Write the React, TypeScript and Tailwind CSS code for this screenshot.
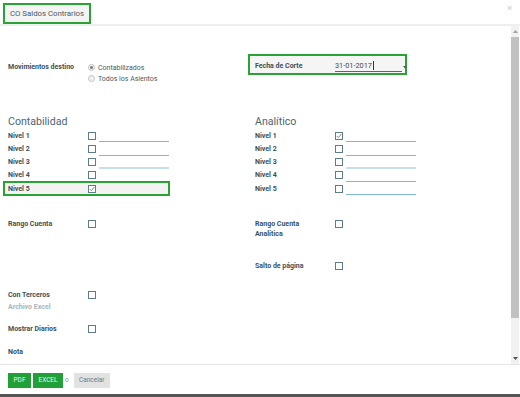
import React from "react";

const LBL = "text-[7px] font-bold text-[#3b525c] leading-[10px] whitespace-nowrap";

function Check({ checked }: { checked?: boolean }) {
  return (
    <div className="w-[8px] h-[8px] border border-[#5f7d88] bg-white flex items-center justify-center shrink-0">
      {checked && (
        <svg width="6" height="6" viewBox="0 0 6 6">
          <path d="M0.8 3.1 L2.3 4.6 L5.3 1.1" stroke="#6b7b80" strokeWidth="0.9" fill="none" />
        </svg>
      )}
    </div>
  );
}

function Line({ thick }: { thick?: boolean }) {
  return (
    <div
      className={
        thick
          ? "ml-[3px] w-[70px] h-full border-b-2 border-[#c6e0e8]"
          : "ml-[3px] w-[70px] h-full border-b border-[#7fbacb]"
      }
    />
  );
}

function LeftRow({ label, checked, input, thick, highlight }: { label: string; checked?: boolean; input?: boolean; thick?: boolean; highlight?: boolean }) {
  if (highlight) {
    return (
      <div className="-ml-[5px] -my-[1px] h-[15.25px] w-[167px] border-2 border-[#2aa336] bg-[#f3f3f3] pl-[3px] flex items-center">
        <div className={`${LBL} w-[80px]`}>{label}</div>
        <Check checked={checked} />
      </div>
    );
  }
  return (
    <div className="h-[13.25px] flex items-center">
      <div className={`${LBL} w-[80px]`}>{label}</div>
      <Check checked={checked} />
      {input && <Line thick={thick} />}
    </div>
  );
}

function Radio({ checked, label }: { checked?: boolean; label: string }) {
  return (
    <div className="flex items-center h-[11px]">
      <div className="w-[7px] h-[7px] rounded-full border border-[#c4c4c4] bg-[#f0f0f0] flex items-center justify-center">
        {checked && <div className="w-[3px] h-[3px] rounded-full bg-[#7a7a7a]" />}
      </div>
      <span className="ml-[3px] text-[7px] text-[#4c5a60] leading-[10px]">{label}</span>
    </div>
  );
}

export default function App() {
  const niveles = [1, 2, 3, 4, 5];
  return (
    <div className="w-[520px] h-[397px] flex flex-col bg-white font-['Roboto',sans-serif] overflow-hidden">
      {/* Header */}
      <div className="h-[26px] border-b-2 border-[#efefef] flex items-start justify-between shrink-0">
        <div className="ml-[3px] mt-[3px] h-[21px] border-2 border-[#2aa336] bg-[#f4f4f4] px-[5px] flex items-center">
          <span className="text-[7.8px] text-[#4c5a60] leading-none">CO Saldos Contrarios</span>
        </div>
        <span className="mr-[8px] mt-[4px] text-[9px] text-[#c8c8c8] leading-none">×</span>
      </div>

      {/* Body */}
      <div className="flex-1 flex min-h-0">
        <div className="flex-1 px-[8px] pt-[28px]">
          {/* Row 1 */}
          <div className="grid grid-cols-[247px_1fr] h-[21px]">
            <div className="flex items-start pt-[8px]">
              <div className={`${LBL} w-[80px]`}>Movimientos destino</div>
              <div className="flex flex-col">
                <Radio checked label="Contabilizados" />
                <Radio label="Todos los Asientos" />
              </div>
            </div>
            <div className="-ml-[7px] h-[21px] w-[159px] border-2 border-[#2aa336] bg-[#f5f5f5] pl-[5px] flex items-center">
              <div className={`${LBL} w-[80px] shrink-0 pt-[3px]`}>Fecha de Corte</div>
              <div className="flex items-end pt-[3px]">
                <div className="w-[67px] h-[11px] border-b border-[#4b6b78] flex items-center">
                  <span className="text-[7.3px] text-[#3c4a50] leading-none">31-01-2017</span>
                  <span className="w-[1px] h-[9px] bg-[#333] ml-[1px]" />
                </div>
                <svg width="4" height="3" viewBox="0 0 4 3" className="ml-[1px] mb-[3px]">
                  <path d="M0 0 L4 0 L2 2.5 Z" fill="#4b5b62" />
                </svg>
              </div>
            </div>
          </div>

          {/* Headings */}
          <div className="grid grid-cols-[247px_1fr] mt-[40px] h-[14px]">
            <div className="text-[10.6px] leading-[14px] text-[#4d6570]">Contabilidad</div>
            <div className="text-[10.6px] leading-[14px] text-[#4d6570]">Analítico</div>
          </div>

          {/* Niveles */}
          <div className="grid grid-cols-[247px_1fr]">
            {niveles.map((n) => (
              <React.Fragment key={n}>
                <LeftRow
                  label={`Nivel ${n}`}
                  checked={n === 5}
                  input={n <= 3}
                  thick={n === 3}
                  highlight={n === 5}
                />
                <div className="h-[13.25px] flex items-center">
                  <div className={`${LBL} w-[80px]`}>{`Nivel ${n}`}</div>
                  <Check checked={n === 1} />
                  <Line thick={n === 3} />
                </div>
              </React.Fragment>
            ))}
          </div>

          {/* Rango */}
          <div className="grid grid-cols-[247px_1fr] mt-[24px]">
            <div className="flex items-start">
              <div className={`${LBL} w-[80px]`}>Rango Cuenta</div>
              <div className="mt-[1px]"><Check /></div>
            </div>
            <div className="flex items-start">
              <div className={`${LBL} w-[80px]`}>Rango Cuenta<br />Analítica</div>
              <div className="mt-[1px]"><Check /></div>
            </div>
          </div>

          {/* Salto */}
          <div className="grid grid-cols-[247px_1fr] mt-[22px]">
            <div />
            <div className="flex items-start">
              <div className={`${LBL} w-[80px]`}>Salto de página</div>
              <div className="mt-[1px]"><Check /></div>
            </div>
          </div>

          {/* Con Terceros */}
          <div className="flex items-start mt-[19px]">
            <div className={`${LBL} w-[80px]`}>Con Terceros</div>
            <div className="mt-[1px]"><Check /></div>
          </div>
          <div className="mt-[2px] text-[7px] font-bold text-[#a9b4b9] leading-[10px]">Archivo Excel</div>

          <div className="flex items-start mt-[12px]">
            <div className={`${LBL} w-[80px]`}>Mostrar Diarios</div>
            <div className="mt-[1px]"><Check /></div>
          </div>
          <div className={`${LBL} mt-[13px]`}>Nota</div>
        </div>

        {/* Scrollbar */}
        <div className="w-[8px] mr-[1px] bg-[#f1f1f1] flex flex-col items-stretch">
          <div className="h-[11px] flex items-center justify-center">
            <svg width="5" height="3" viewBox="0 0 5 3"><path d="M0 3 L5 3 L2.5 0 Z" fill="#a3a3a3" /></svg>
          </div>
          <div className="h-[281px] bg-[#c1c1c1]" />
          <div className="flex-1" />
          <div className="h-[11px] flex items-center justify-center">
            <svg width="5" height="3" viewBox="0 0 5 3"><path d="M0 0 L5 0 L2.5 3 Z" fill="#505050" /></svg>
          </div>
        </div>
      </div>

      {/* Footer */}
      <div className="h-[30px] border-t border-[#e6e6e6] shrink-0 flex items-start pt-[8px] pl-[8px]">
        <div className="h-[15px] w-[23px] bg-[#21a038] flex items-center justify-center text-[6.5px] text-[#e6f4e6] leading-none">PDF</div>
        <div className="ml-[2px] h-[15px] w-[30px] bg-[#21a038] flex items-center justify-center text-[6.5px] text-[#e6f4e6] leading-none">EXCEL</div>
        <div className="ml-[2px] h-[15px] flex items-center text-[6.5px] text-[#8a9599] leading-none">o</div>
        <div className="ml-[5px] h-[15px] w-[36px] bg-[#e2e2e2] flex items-center justify-center text-[6.5px] text-[#6b7b80] leading-none">Cancelar</div>
      </div>
      <div className="h-[3px] bg-[#555555] shrink-0" />
    </div>
  );
}
